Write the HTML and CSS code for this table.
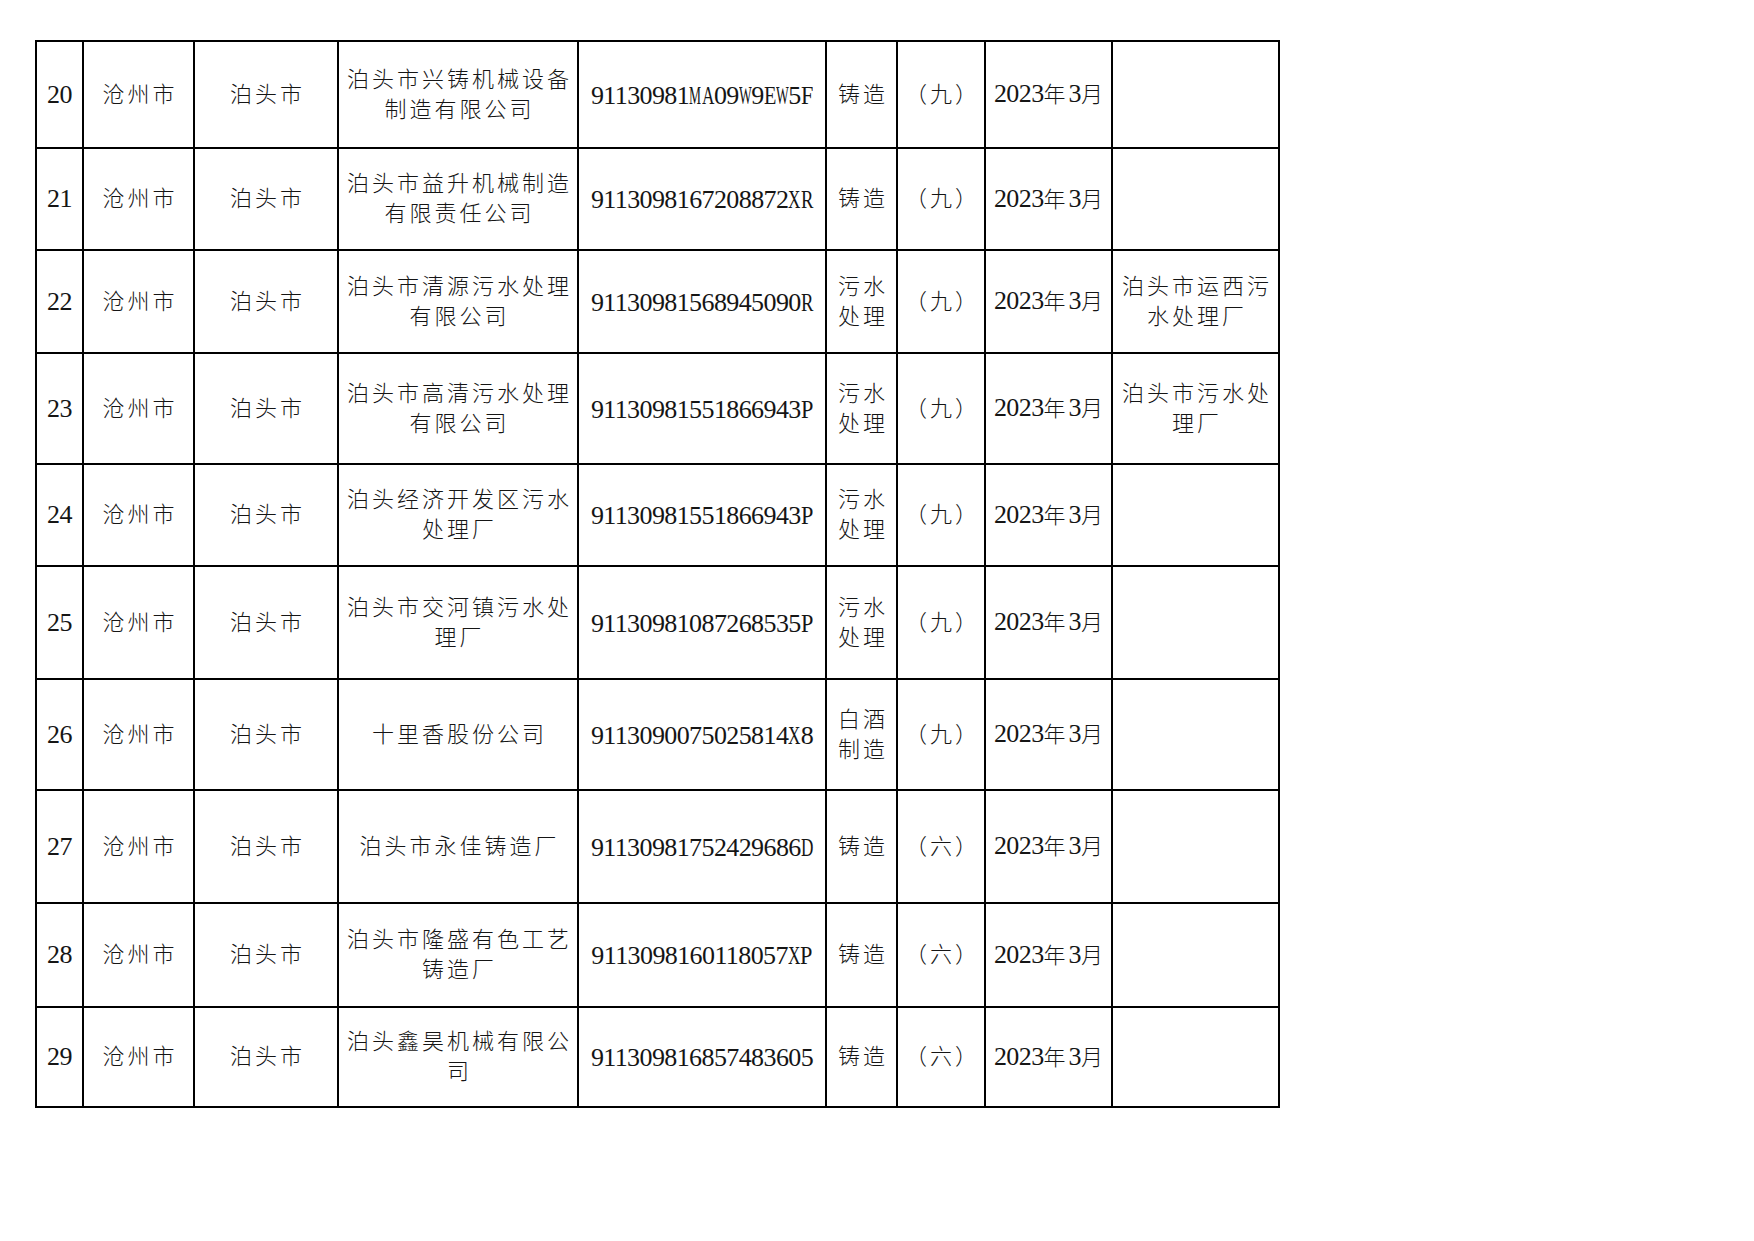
FILE: index.html
```html
<!DOCTYPE html>
<html lang="zh-CN">
<head>
<meta charset="utf-8">
<title>泊头市企业名单</title>
<link rel="stylesheet" href="styles.css">
</head>
<body>
<div class="page">
<table class="sheet">
<colgroup>
<col class="c-no"><col class="c-city"><col class="c-county"><col class="c-name"><col class="c-code"><col class="c-ind"><col class="c-cat"><col class="c-date"><col class="c-note">
</colgroup>
<tbody>
<tr>
<td class="num">20</td><td>沧州市</td><td>泊头市</td><td>泊头市兴铸机械设备制造有限公司</td>
<td class="code"><span class="id">91130981<span class="lt w">M</span><span class="lt a">A</span>09<span class="lt w">W</span>9<span class="lt e">E</span><span class="lt w">W</span>5<span class="lt p">F</span></span></td>
<td>铸造</td><td>（九）</td><td class="date"><span class="num">2023</span>年<span class="num">3</span>月</td><td></td>
</tr>
<tr>
<td class="num">21</td><td>沧州市</td><td>泊头市</td><td>泊头市益升机械制造有限责任公司</td>
<td class="code"><span class="id">9113098167208872<span class="lt a">X</span><span class="lt r">R</span></span></td>
<td>铸造</td><td>（九）</td><td class="date"><span class="num">2023</span>年<span class="num">3</span>月</td><td></td>
</tr>
<tr>
<td class="num">22</td><td>沧州市</td><td>泊头市</td><td>泊头市清源污水处理有限公司</td>
<td class="code"><span class="id">91130981568945090<span class="lt r">R</span></span></td>
<td>污水处理</td><td>（九）</td><td class="date"><span class="num">2023</span>年<span class="num">3</span>月</td><td>泊头市运西污水处理厂</td>
</tr>
<tr>
<td class="num">23</td><td>沧州市</td><td>泊头市</td><td>泊头市高清污水处理有限公司</td>
<td class="code"><span class="id">91130981551866943<span class="lt p">P</span></span></td>
<td>污水处理</td><td>（九）</td><td class="date"><span class="num">2023</span>年<span class="num">3</span>月</td><td>泊头市污水处理厂</td>
</tr>
<tr>
<td class="num">24</td><td>沧州市</td><td>泊头市</td><td>泊头经济开发区污水处理厂</td>
<td class="code"><span class="id">91130981551866943<span class="lt p">P</span></span></td>
<td>污水处理</td><td>（九）</td><td class="date"><span class="num">2023</span>年<span class="num">3</span>月</td><td></td>
</tr>
<tr>
<td class="num">25</td><td>沧州市</td><td>泊头市</td><td>泊头市交河镇污水处理厂</td>
<td class="code"><span class="id">91130981087268535<span class="lt p">P</span></span></td>
<td>污水处理</td><td>（九）</td><td class="date"><span class="num">2023</span>年<span class="num">3</span>月</td><td></td>
</tr>
<tr>
<td class="num">26</td><td>沧州市</td><td>泊头市</td><td>十里香股份公司</td>
<td class="code"><span class="id">9113090075025814<span class="lt a">X</span>8</span></td>
<td>白酒制造</td><td>（九）</td><td class="date"><span class="num">2023</span>年<span class="num">3</span>月</td><td></td>
</tr>
<tr>
<td class="num">27</td><td>沧州市</td><td>泊头市</td><td>泊头市永佳铸造厂</td>
<td class="code"><span class="id">91130981752429686<span class="lt a">D</span></span></td>
<td>铸造</td><td>（六）</td><td class="date"><span class="num">2023</span>年<span class="num">3</span>月</td><td></td>
</tr>
<tr>
<td class="num">28</td><td>沧州市</td><td>泊头市</td><td>泊头市隆盛有色工艺铸造厂</td>
<td class="code"><span class="id">9113098160118057<span class="lt a">X</span><span class="lt p">P</span></span></td>
<td>铸造</td><td>（六）</td><td class="date"><span class="num">2023</span>年<span class="num">3</span>月</td><td></td>
</tr>
<tr>
<td class="num">29</td><td>沧州市</td><td>泊头市</td><td>泊头鑫昊机械有限公司</td>
<td class="code"><span class="id">911309816857483605</span></td>
<td>铸造</td><td>（六）</td><td class="date"><span class="num">2023</span>年<span class="num">3</span>月</td><td></td>
</tr>
</tbody>
</table>
</div>
</body>
</html>
```
FILE: styles.css
```css
html, body {
  margin: 0;
  padding: 0;
  background: #fff;
}

.page {
  padding: 40px 0 0 35px;
}

.sheet {
  border-collapse: collapse;
  table-layout: fixed;
  width: 1243px;
  color: #151515;
  font-family: "Noto Sans CJK SC", "Noto Sans CJK JP", sans-serif;
  font-weight: 300;
  font-size: 22px;
  letter-spacing: 3px;
  line-height: 30px;
}

.c-no { width: 47px; }
.c-city { width: 111px; }
.c-county { width: 144px; }
.c-name { width: 240px; }
.c-code { width: 248px; }
.c-ind { width: 71px; }
.c-cat { width: 88px; }
.c-date { width: 127px; }
.c-note { width: 167px; }

.sheet td {
  border: 2px solid #000;
  padding: 0 2px 6px 5px;
  text-align: center;
  vertical-align: middle;
  overflow: visible;
}

.sheet tr:nth-child(1) { height: 107px; }
.sheet tr:nth-child(2) { height: 102px; }
.sheet tr:nth-child(3) { height: 103px; }
.sheet tr:nth-child(4) { height: 111px; }
.sheet tr:nth-child(5) { height: 102px; }
.sheet tr:nth-child(6) { height: 113px; }
.sheet tr:nth-child(7) { height: 111px; }
.sheet tr:nth-child(8) { height: 113px; }
.sheet tr:nth-child(9) { height: 104px; }
.sheet tr:nth-child(10) { height: 100px; }

.num,
.id {
  font-family: "Liberation Serif", "Times New Roman", serif;
  font-weight: 400;
  font-size: 26px;
  letter-spacing: -0.6px;
}

.sheet td.num,
.sheet td.code {
  padding: 0 2px;
}

.sheet td.date {
  padding: 0 2px 3px 5px;
}

.id {
  display: inline-block;
  white-space: nowrap;
}

.lt {
  display: inline-block;
  width: 12.4px;
  transform-origin: 0 50%;
}

.lt.w { transform: scaleX(0.52); }
.lt.a { transform: scaleX(0.66); }
.lt.r { transform: scaleX(0.72); }
.lt.e { transform: scaleX(0.78); }
.lt.p { transform: scaleX(0.855); }
```
